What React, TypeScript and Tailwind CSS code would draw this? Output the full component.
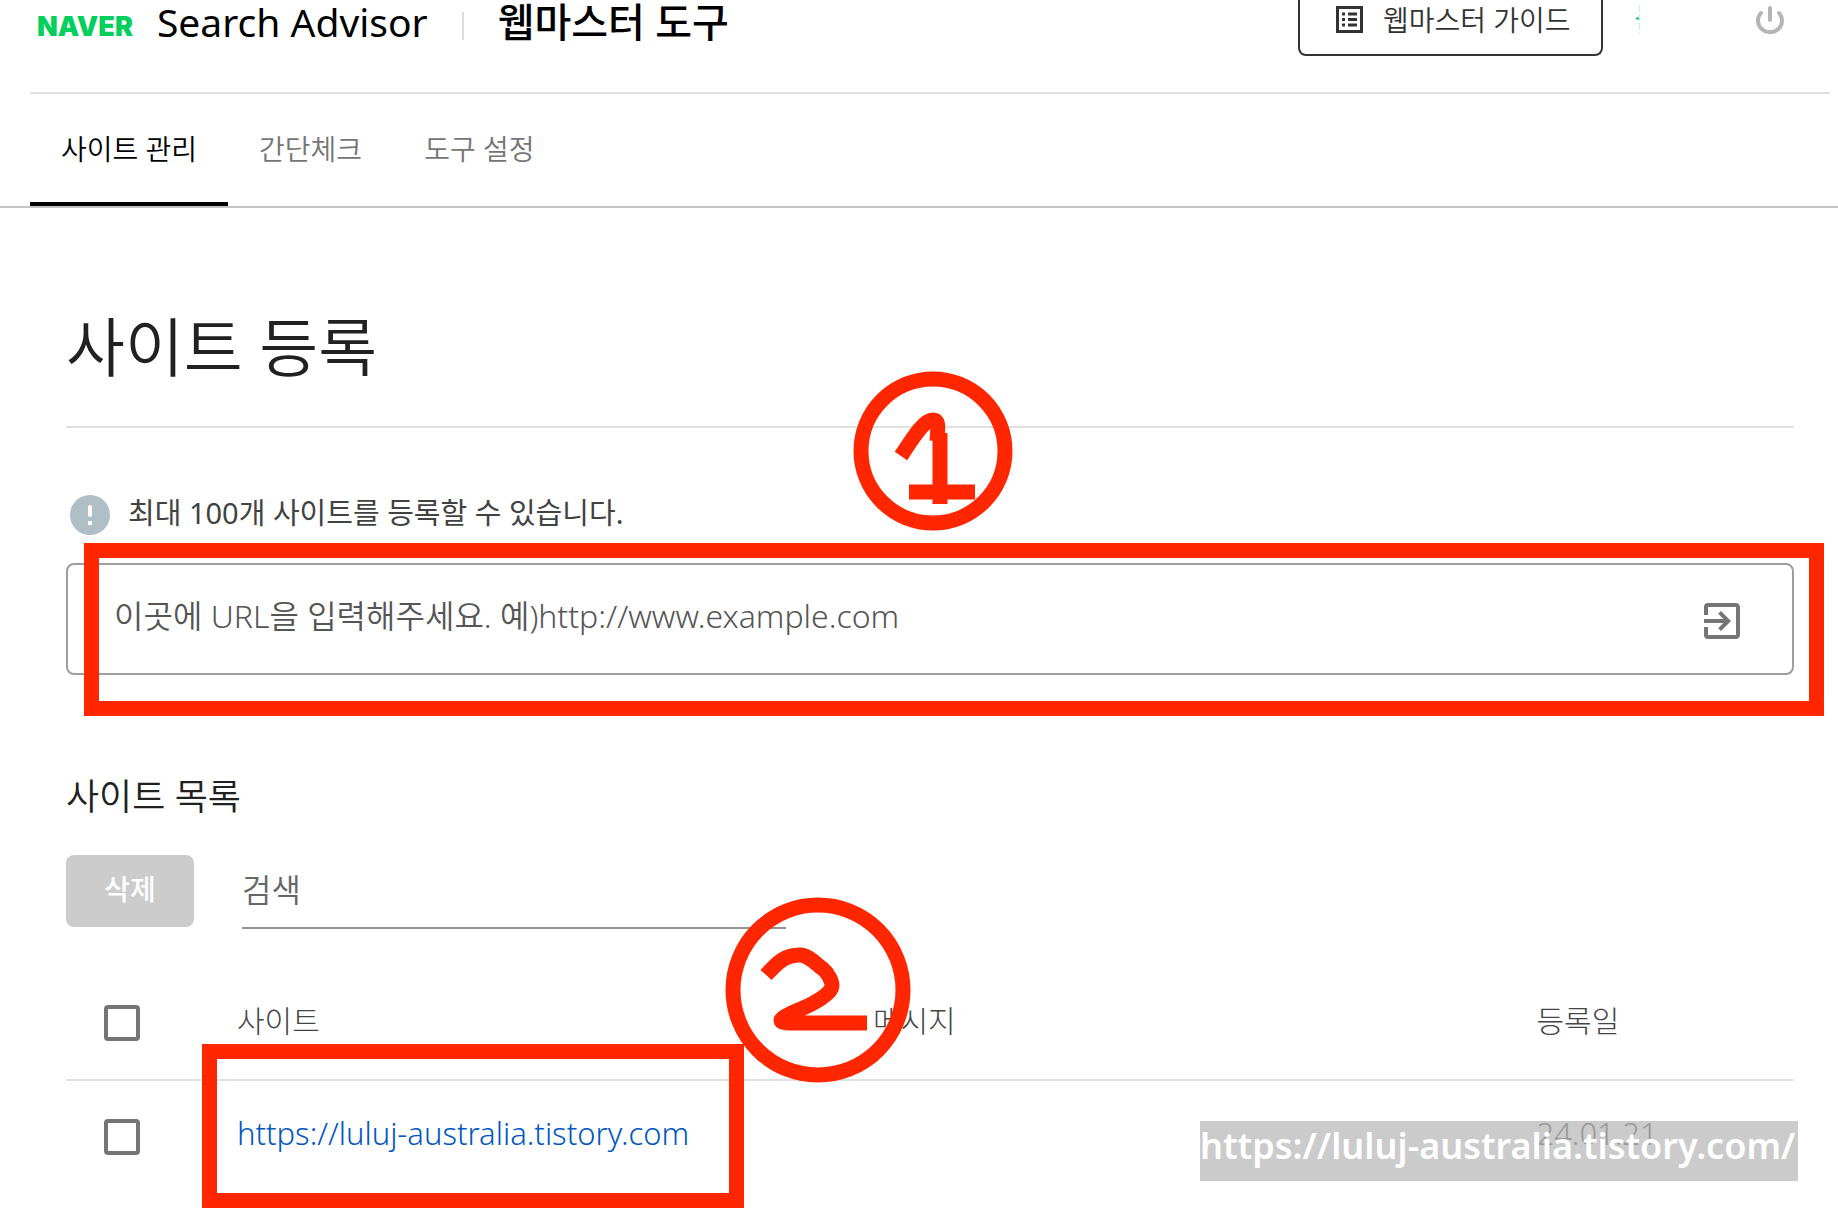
import type { ReactNode } from 'react'

interface Site {
  url: string
  message: string
  registeredAt: string
}

const tabs = [
  { label: '사이트 관리', active: true },
  { label: '간단체크', active: false },
  { label: '도구 설정', active: false },
]

const sites: Site[] = [
  { url: 'https://luluj-australia.tistory.com', message: '', registeredAt: '24.01.21' },
]

function GuideIcon() {
  return (
    <svg viewBox="0 0 27 27" className="h-[27px] w-[27px] shrink-0" fill="none" aria-hidden="true">
      <rect x="1.5" y="1.5" width="24" height="24" stroke="#333" strokeWidth="3" />
      <path d="M6 8h3M12 8h9M6 13.5h3M12 13.5h9M6 19h3M12 19h9" stroke="#333" strokeWidth="3" />
    </svg>
  )
}

function PowerIcon() {
  return (
    <svg viewBox="0 0 28 28" className="h-7 w-7" fill="none" stroke="#b5b5b5" strokeWidth="4" strokeLinecap="round" aria-hidden="true">
      <path d="M14 2v12M5 7a12 11.5 0 1 0 18 0" />
    </svg>
  )
}

function ExitIcon() {
  return (
    <svg viewBox="0 0 24 24" className="h-12 w-12" fill="#757575" aria-hidden="true">
      <path d="M10.09 15.59L11.5 17l5-5-5-5-1.41 1.41L12.67 11H3v2h9.67l-2.58 2.59zM19 3H5a2 2 0 0 0-2 2v4h2V5h14v14H5v-4H3v4a2 2 0 0 0 2 2h14c1.1 0 2-.9 2-2V5c0-1.1-.9-2-2-2z" />
    </svg>
  )
}

function InfoIcon() {
  return (
    <svg viewBox="0 0 40 40" className="h-10 w-10 shrink-0" aria-hidden="true">
      <circle cx="20" cy="20" r="20" fill="#b0bec5" />
      <path d="M20 12v8" stroke="#fff" strokeWidth="4" strokeLinecap="round" />
      <path d="M18 26h4v4h-4z" fill="#fff" />
    </svg>
  )
}

function Checkbox({ label }: { label: string }) {
  return (
    <input
      type="checkbox"
      aria-label={label}
      className="block h-9 w-9 appearance-none rounded border-4 border-[#757575] bg-white checked:bg-[#757575]"
    />
  )
}

function Th({ children }: { children: ReactNode }) {
  return <th className="px-[31px] pb-1 text-left text-[30px] font-light leading-10 text-[#444]">{children}</th>
}

// pen marks drawn over the page
function MarkOne() {
  return (
    <svg viewBox="0 0 160 160" className="pointer-events-none absolute -top-[57px] left-[787px] z-10 h-40 w-40" fill="none" stroke="#ff2600" strokeWidth="15" aria-hidden="true">
      <circle cx="80" cy="80" r="72" />
      <path d="M48 85C58 70 70 49 80 49C86 49 85 56 84 70M87 62V133M56 121H122" />
    </svg>
  )
}

function MarkTwo() {
  return (
    <svg viewBox="0 0 186 186" className="pointer-events-none absolute -top-[70px] left-[659px] z-10 h-[186px] w-[186px]" fill="none" stroke="#ff2600" strokeWidth="15" aria-hidden="true">
      <circle cx="93" cy="93" r="85" />
      <path d="M41 78C53 65 60 58 75 58C83 58 90 66 98 72C103 76 107 84 107 89C107 97 86 108 76 112C64 117 56 121 56 123C56 126 62 126 68 126H142" />
    </svg>
  )
}

export default function App() {
  return (
    <div className="flex min-h-screen flex-col bg-white font-['Noto_Sans','Noto_Sans_CJK_KR',sans-serif] text-[#212121]">
      <header className="ml-[30px] mr-2 flex h-[94px] items-start justify-between border-b-2 border-[#e0e0e0]">
        <div className="flex h-11 items-center pl-[7px] text-black">
          <a href="#naver" className="mt-[10px] font-['Inter',sans-serif] text-[27px] font-black leading-8 text-[#03cf5d]">
            NAVER
          </a>
          <h1 className="ml-6 text-[39px] font-[450] leading-[44px]">Search Advisor</h1>
          <span className="mx-[34px] mt-2 h-7 w-0.5 bg-[#ddd]" />
          <span className="text-[40px] font-medium leading-[44px]">웹마스터 도구</span>
        </div>
        <div className="flex items-start">
          <button
            type="button"
            className="flex h-14 w-[305px] items-start gap-5 rounded-b-lg border-2 border-t-0 border-[#333] pl-9 pt-[6px] text-[28px] font-[350] leading-7 text-[#333]"
          >
            <GuideIcon />
            웹마스터 가이드
          </button>
          <svg viewBox="0 0 4 28" className="ml-[33px] mt-[5px] h-7 w-1" fill="none" aria-hidden="true">
            <path d="M0 13.5h4" stroke="#03c75a" strokeWidth="2" />
            <path d="M3.5 0v28" stroke="#c3f3d8" strokeDasharray="7 2" />
          </svg>
          <button type="button" aria-label="로그아웃" className="ml-[116px] mr-[46px] mt-[6px]">
            <PowerIcon />
          </button>
        </div>
      </header>

      <nav className="flex h-[114px] border-b-2 border-[#c4c4c4] pl-[30px]">
        {tabs.map((tab) => (
          <a
            key={tab.label}
            href="#"
            className={`flex items-center border-b-4 px-[31px] pt-[2px] text-[28px] font-[350] ${
              tab.active ? 'border-black text-black' : 'border-transparent text-[#757575]'
            }`}
          >
            {tab.label}
          </a>
        ))}
      </nav>

      <main className="pl-[66px] pr-11">
        <h2 className="border-b-2 border-[#e0e0e0] pb-[34px] pt-[94px] text-[64px] font-[350] leading-[90px]">사이트 등록</h2>

        <section className="relative">
          <MarkOne />
          <div className="flex items-center gap-[18px] pb-7 pl-1 pt-[67px]">
            <InfoIcon />
            <p className="pb-1 text-[29px] font-normal leading-9 text-[#424242]">최대 100개 사이트를 등록할 수 있습니다.</p>
          </div>
          <form className="relative flex h-28 items-center rounded-lg border-2 border-[#9e9e9e] pl-[46px] pr-[46px]">
            <input
              type="text"
              aria-label="사이트 URL"
              placeholder="이곳에 URL을 입력해주세요. 예)http://www.example.com"
              className="h-16 min-w-0 flex-1 bg-transparent pb-2 text-[32px] font-[350] outline-none placeholder:text-[#555]"
            />
            <button type="button" aria-label="사이트 추가" className="mt-1">
              <ExitIcon />
            </button>
            <span className="pointer-events-none absolute -bottom-[43px] -right-8 -top-[22px] left-4 border-[15px] border-[#ff2600]" />
          </form>
        </section>

        <section className="pt-[94px]">
          <h3 className="text-4xl font-[350] leading-[56px]">사이트 목록</h3>
          <div className="flex items-start gap-12 pt-[30px]">
            <button type="button" disabled className="h-[72px] w-32 rounded-lg bg-[#ccc] pb-1 text-[28px] font-medium text-white">
              삭제
            </button>
            <input
              type="search"
              aria-label="검색"
              placeholder="검색"
              className="h-[74px] w-[544px] border-b-2 border-[#949494] pb-1 text-[32px] font-[350] outline-none placeholder:text-[#666]"
            />
          </div>

          <div className="relative mt-[38px]">
            <MarkTwo />
            <span className="pointer-events-none absolute left-[136px] top-[77px] z-10 h-[164px] w-[542px] border-[15px] border-[#ff2600]" />
            <table className="w-full table-fixed border-collapse">
              <colgroup>
                <col className="w-[140px]" />
                <col className="w-[36.8%]" />
                <col className="w-[38.4%]" />
                <col />
              </colgroup>
              <thead>
                <tr className="h-[113px] border-b-2 border-[#e0e0e0]">
                  <th className="pl-[38px]">
                    <Checkbox label="전체 선택" />
                  </th>
                  <Th>사이트</Th>
                  <Th>메시지</Th>
                  <Th>등록일</Th>
                </tr>
              </thead>
              <tbody>
                {sites.map((site) => (
                  <tr key={site.url} className="h-28 text-[31px] font-[350] leading-10">
                    <td className="pl-[38px]">
                      <Checkbox label={site.url} />
                    </td>
                    <td className="px-[31px] pb-2 text-[#0057c2]">
                      <a href={site.url}>{site.url}</a>
                    </td>
                    <td className="px-[31px] pb-2">{site.message}</td>
                    <td className="px-[31px] pb-2 text-[#666]">{site.registeredAt}</td>
                  </tr>
                ))}
              </tbody>
            </table>
            <div className="absolute -right-1 top-[154px] h-[60px] w-[598px] whitespace-nowrap bg-[#b2b2b2]/67 text-[36px] font-semibold leading-[50px] text-white">
              https://luluj-australia.tistory.com/
            </div>
          </div>
        </section>
      </main>
    </div>
  )
}
